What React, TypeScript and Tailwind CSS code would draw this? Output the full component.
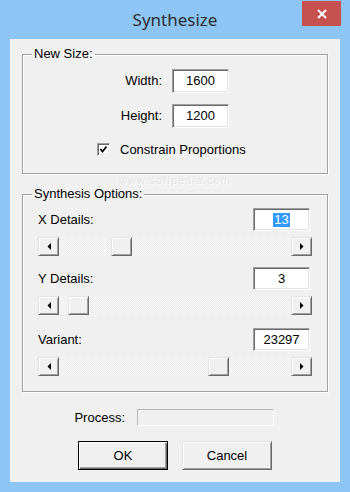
import React from 'react';

const sunken =
  'border border-t-[#a0a0a0] border-l-[#a0a0a0] border-b-white border-r-white shadow-[inset_1px_1px_0_#696969,inset_-1px_-1px_0_#e3e3e3]';
const raised =
  'border border-t-[#e3e3e3] border-l-[#e3e3e3] border-b-[#696969] border-r-[#696969] shadow-[inset_1px_1px_0_#fff,inset_-1px_-1px_0_#a0a0a0] bg-[#f0f0f0]';
const groupBox =
  'w-[306px] mx-[12px] border border-[#a0a0a0] shadow-[inset_1px_1px_0_#fff,1px_1px_0_#fff]';

function ScrollBar({ thumb }: { thumb: string }) {
  return (
    <div className="flex h-[19px] w-[274px]">
      <div className={`${raised} w-[21px] h-full flex items-center justify-center`}>
        <svg width="4" height="7" viewBox="0 0 4 7">
          <polygon points="4,0 4,7 0.5,3.5" fill="#000" />
        </svg>
      </div>
      <div className="flex-1 flex bg-[repeating-conic-gradient(#fff_0_25%,#e8e8e8_0_50%)] bg-[length:2px_2px]">
        <div className={`${raised} ${thumb} w-[21px] h-full`} />
      </div>
      <div className={`${raised} w-[21px] h-full flex items-center justify-center`}>
        <svg width="4" height="7" viewBox="0 0 4 7">
          <polygon points="0,0 0,7 3.5,3.5" fill="#000" />
        </svg>
      </div>
    </div>
  );
}

function ValueRow({ label, children }: { label: string; children: React.ReactNode }) {
  return (
    <div className="flex items-center justify-between w-[272px]">
      <span>{label}</span>
      <div className={`${sunken} w-[57px] h-[23px] bg-white flex items-center justify-center`}>{children}</div>
    </div>
  );
}

export default function App() {
  return (
    <div
      className="w-[350px] h-[492px] bg-[#8dc6f4] text-[13px] text-black"
      style={{ fontFamily: '"Liberation Sans", Arial, sans-serif' }}
    >
      <div className="relative h-[39px] flex items-center justify-center">
        <span className="text-[17px] text-[#2d2d2d] mt-[1px]" style={{ fontFamily: '"Noto Sans", "Open Sans", sans-serif' }}>
          Synthesize
        </span>
        <div className="absolute right-[9px] top-[1px] w-[39px] h-[25px] bg-[#c75050] flex items-center justify-center">
          <svg width="10" height="10" viewBox="0 0 10 10">
            <path d="M1 1 L9 9 M9 1 L1 9" stroke="#fff" strokeWidth="2" />
          </svg>
        </div>
      </div>

      <div className="mx-[10px] h-[443px] bg-[#f0f0f0] flex flex-col leading-[16px]">
        <fieldset className={`${groupBox} mt-[7px] pb-[16px]`}>
          <legend className="ml-[9px] px-[2px] leading-[16px]">New Size:</legend>
          <div className="flex items-center mt-[7px]">
            <span className="w-[139px] text-right">Width:</span>
            <div className={`${sunken} ml-[10px] w-[57px] h-[24px] bg-white flex items-center justify-center`}>1600</div>
          </div>
          <div className="flex items-center mt-[11px]">
            <span className="w-[139px] text-right">Height:</span>
            <div className={`${sunken} ml-[10px] w-[57px] h-[24px] bg-white flex items-center justify-center`}>1200</div>
          </div>
          <div className="flex items-center mt-[14px] pl-[74px] h-[15px]">
            <div className={`${sunken} w-[13px] h-[13px] bg-white flex items-center justify-center`}>
              <svg width="9" height="9" viewBox="0 0 9 9">
                <path d="M1.5 4 L3.5 6.5 L7.5 1.5" stroke="#000" strokeWidth="1.8" fill="none" />
              </svg>
            </div>
            <span className="ml-[10px]">Constrain Proportions</span>
          </div>
        </fieldset>

        <div className="h-[12px] flex items-center justify-center text-[11px] tracking-[1px] text-[#e4e4e4] [text-shadow:1px_1px_0_#fff]">
          www.softpedia.com
        </div>

        <fieldset className={`${groupBox} pl-[15px] pb-[15px]`}>
          <legend className="-ml-[6px] px-[2px] leading-[16px]">Synthesis Options:</legend>
          <div className="mt-[6px]">
            <ValueRow label="X Details:">
              <span className="bg-[#3399ff] text-white leading-[14px] px-[1px]">13</span>
            </ValueRow>
            <div className="mt-[6px]">
              <ScrollBar thumb="ml-[52px]" />
            </div>
          </div>
          <div className="mt-[11px]">
            <ValueRow label="Y Details:">3</ValueRow>
            <div className="mt-[6px]">
              <ScrollBar thumb="ml-[9px]" />
            </div>
          </div>
          <div className="mt-[13px]">
            <ValueRow label="Variant:">23297</ValueRow>
            <div className="mt-[6px]">
              <ScrollBar thumb="ml-[149px]" />
            </div>
          </div>
        </fieldset>

        <div className="flex items-center mt-[17px]">
          <span className="w-[115px] text-right">Process:</span>
          <div className="ml-[12px] w-[137px] h-[17px] border border-t-[#b9b9b9] border-l-[#b9b9b9] border-b-white border-r-white" />
        </div>

        <div className="flex justify-center gap-[14px] mt-[15px]">
          <button className="w-[90px] h-[29px] border border-black bg-[#f0f0f0] shadow-[inset_1px_1px_0_#fff,inset_-1px_-1px_0_#696969,inset_-2px_-2px_0_#a0a0a0]">
            OK
          </button>
          <button className={`${raised} w-[90px] h-[29px]`}>Cancel</button>
        </div>
      </div>
    </div>
  );
}
